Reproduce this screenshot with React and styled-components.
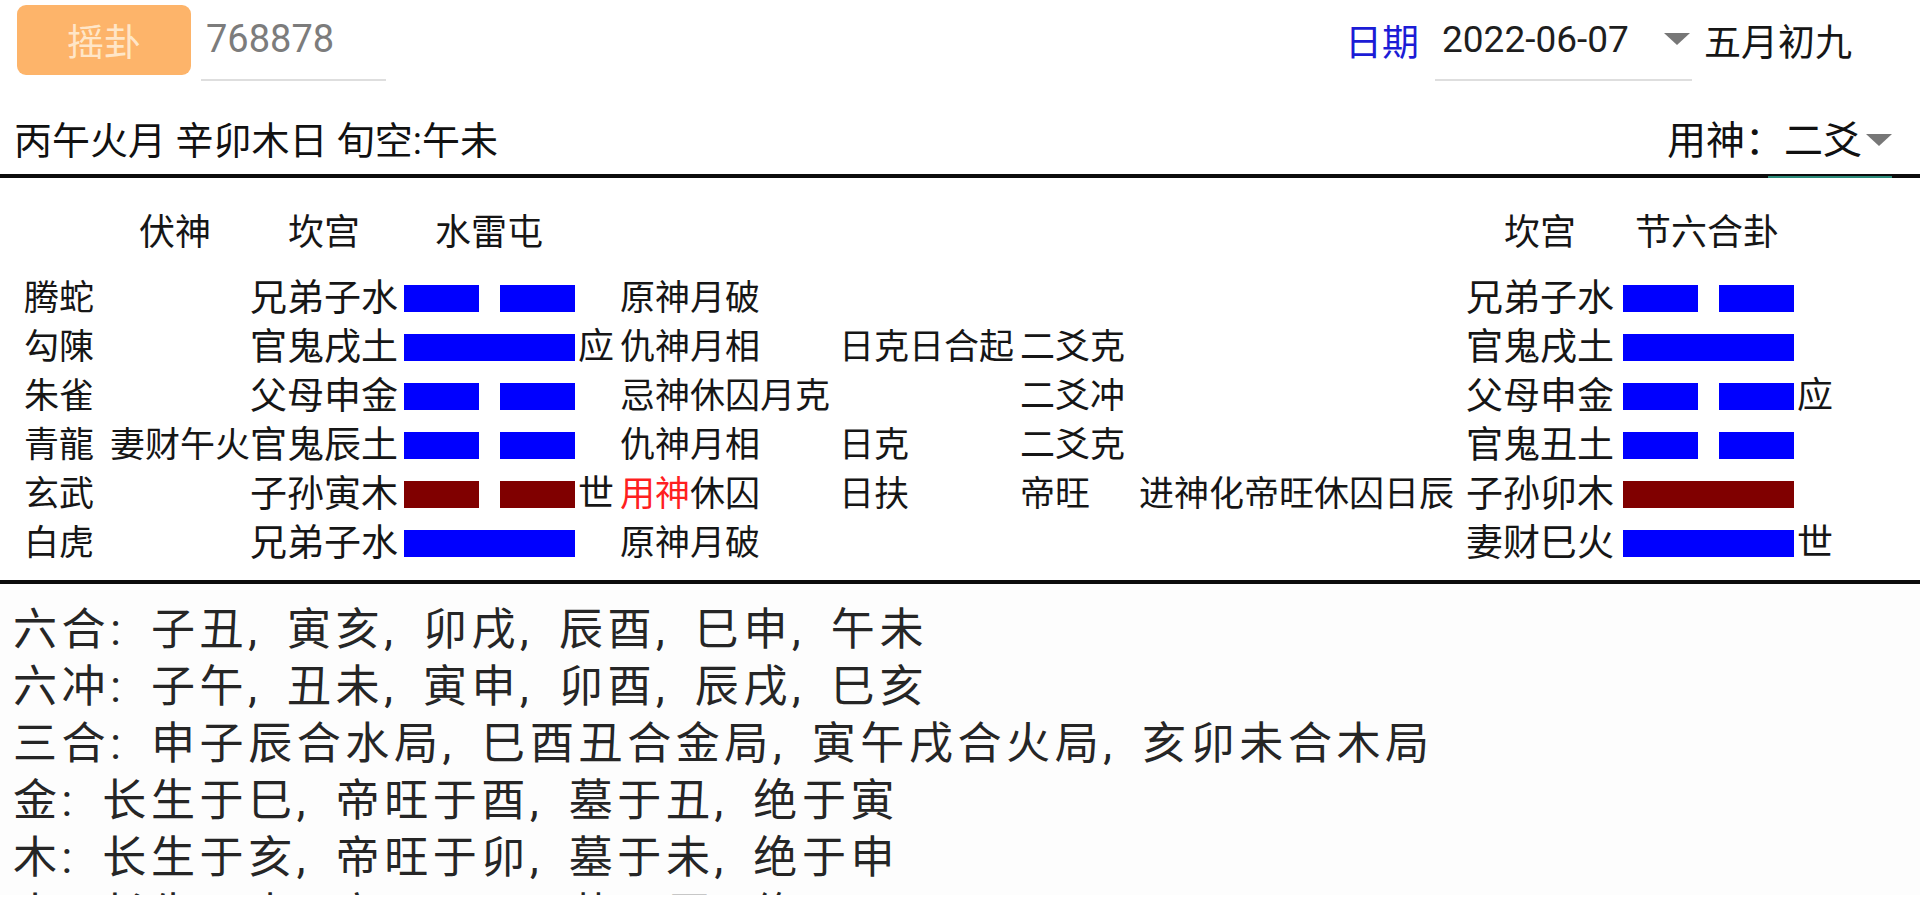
import React from "react";
import styled, { createGlobalStyle } from "styled-components";

const GlobalStyle = createGlobalStyle`
  html, body {
    margin: 0;
    padding: 0;
    background: #ffffff;
  }
  body {
    font-family: Roboto, "Noto Sans CJK SC", sans-serif;
    color: #161616;
    overflow: hidden;
  }
`;

const rows = [
  { god: "腾蛇", fu: "", name: "兄弟子水", yin: true, mark: "", rel: "原神月破", day: "", yao: "", change: "", toName: "兄弟子水", toYin: true, toMark: "" },
  { god: "勾陳", fu: "", name: "官鬼戌土", yin: false, mark: "应", rel: "仇神月相", day: "日克日合起", yao: "二爻克", change: "", toName: "官鬼戌土", toYin: false, toMark: "" },
  { god: "朱雀", fu: "", name: "父母申金", yin: true, mark: "", rel: "忌神休囚月克", day: "", yao: "二爻冲", change: "", toName: "父母申金", toYin: true, toMark: "应" },
  { god: "青龍", fu: "妻财午火", name: "官鬼辰土", yin: true, mark: "", rel: "仇神月相", day: "日克", yao: "二爻克", change: "", toName: "官鬼丑土", toYin: true, toMark: "" },
  { god: "玄武", fu: "", name: "子孙寅木", yin: true, moving: true, mark: "世", rel: "休囚", useGod: true, day: "日扶", yao: "帝旺", change: "进神化帝旺休囚日辰", toName: "子孙卯木", toYin: false, toMoving: true, toMark: "" },
  { god: "白虎", fu: "", name: "兄弟子水", yin: false, mark: "", rel: "原神月破", day: "", yao: "", change: "", toName: "妻财巳火", toYin: false, toMark: "世" },
];

const notes = [
  "六合: 子丑, 寅亥, 卯戌, 辰酉, 巳申, 午未",
  "六冲: 子午, 丑未, 寅申, 卯酉, 辰戌, 巳亥",
  "三合: 申子辰合水局, 巳酉丑合金局, 寅午戌合火局, 亥卯未合木局",
  "金: 长生于巳, 帝旺于酉, 墓于丑, 绝于寅",
  "木: 长生于亥, 帝旺于卯, 墓于未, 绝于申",
  "水: 长生于申, 帝旺于子, 墓于辰, 绝于巳",
];

function Caret() {
  return (
    <CaretIcon viewBox="0 0 26 12" width="26" height="12">
      <polygon points="0,0 26,0 13,12" fill="#777777" />
    </CaretIcon>
  );
}

function Yao({ yin, moving }) {
  const color = moving ? "#800000" : "#0000ff";
  return (
    <YaoBar>
      {yin ? (
        <>
          <YaoPiece color={color} />
          <YaoPiece color={color} />
        </>
      ) : (
        <YaoPiece color={color} solid />
      )}
    </YaoBar>
  );
}

export default function App() {
  return (
    <>
      <GlobalStyle />
      <Page>
        <TopBar>
          <CastButton>摇卦</CastButton>
          <NumberField>768878</NumberField>
          <DateGroup>
            <DateLabel>日期</DateLabel>
            <Spinner>
              <SpinnerValue>2022-06-07</SpinnerValue>
              <Caret />
            </Spinner>
            <LunarDate>五月初九</LunarDate>
          </DateGroup>
        </TopBar>

        <InfoRow>
          <InfoText>丙午火月 辛卯木日 旬空:午未</InfoText>
          <UseGodPicker>
            用神：二爻
            <Caret />
          </UseGodPicker>
        </InfoRow>
        <Divider>
          <PickerLine />
        </Divider>

        <Chart>
          <HeaderRow>
            <HeadCell col={2} pad={29}>伏神</HeadCell>
            <HeadCell col={3} pad={38}>坎宫</HeadCell>
            <HeadCell col={4} pad={31}>水雷屯</HeadCell>
            <HeadCell col={10} pad={38}>坎宫</HeadCell>
            <HeadCell col={11} pad={12}>节六合卦</HeadCell>
          </HeaderRow>
          {rows.map((r) => (
            <ChartRow key={r.god}>
              <Cell>{r.god}</Cell>
              <Cell>{r.fu}</Cell>
              <NameCell>{r.name}</NameCell>
              <Yao yin={r.yin} moving={r.moving} />
              <MarkCell>{r.mark}</MarkCell>
              <Cell>
                {r.useGod && <UseGod>用神</UseGod>}
                {r.rel}
              </Cell>
              <Cell>{r.day}</Cell>
              <Cell>{r.yao}</Cell>
              <Cell>{r.change}</Cell>
              <NameCell>{r.toName}</NameCell>
              <Yao yin={r.toYin} moving={r.toMoving} />
              <MarkCell>{r.toMark}</MarkCell>
            </ChartRow>
          ))}
        </Chart>
        <Divider />

        <Notes>
          {notes.map((n) => (
            <NoteLine key={n}>{n}</NoteLine>
          ))}
        </Notes>
      </Page>
    </>
  );
}

const Page = styled.div`
  height: 100vh;
  box-sizing: border-box;
  padding-bottom: 9px;
  overflow: hidden;
  display: flex;
  flex-direction: column;
`;

const TopBar = styled.div`
  display: flex;
  align-items: flex-start;
  flex-shrink: 0;
  height: 86px;
  padding: 5px 68px 0 17px;
  box-sizing: border-box;
`;

const CastButton = styled.div`
  width: 174px;
  height: 70px;
  border-radius: 9px;
  background: #fdb46a;
  color: #ffe6c8;
  font-size: 37px;
  display: flex;
  align-items: center;
  justify-content: center;
  flex-shrink: 0;
`;

const NumberField = styled.div`
  margin-left: 10px;
  width: 185px;
  height: 76px;
  box-sizing: border-box;
  border-bottom: 2px solid #dedede;
  padding: 0 0 6px 5px;
  display: flex;
  align-items: center;
  font-size: 38px;
  color: #7c7c7c;
`;

const DateGroup = styled.div`
  margin-left: auto;
  display: flex;
  align-items: flex-start;
`;

const DateLabel = styled.div`
  height: 70px;
  display: flex;
  align-items: center;
  font-size: 37px;
  color: #1c1cd6;
`;

const Spinner = styled.div`
  margin-left: 16px;
  width: 257px;
  height: 76px;
  box-sizing: border-box;
  border-bottom: 2px solid #dedede;
  padding: 0 2px 6px 7px;
  display: flex;
  align-items: center;
`;

const SpinnerValue = styled.span`
  font-size: 37px;
  color: #1e1e1e;
  flex: 1;
`;

const CaretIcon = styled.svg`
  display: block;
  flex-shrink: 0;
`;

const LunarDate = styled.div`
  margin-left: 12px;
  height: 70px;
  display: flex;
  align-items: center;
  font-size: 37px;
  color: #161616;
`;

const InfoRow = styled.div`
  display: flex;
  align-items: center;
  flex-shrink: 0;
  height: 88px;
  padding: 14px 28px 0 14px;
  box-sizing: border-box;
  color: #111111;
`;

const InfoText = styled.div`
  font-size: 38px;
`;

const UseGodPicker = styled.div`
  margin-left: auto;
  display: flex;
  align-items: center;
  gap: 4px;
  font-size: 39px;

  svg {
    margin-top: 6px;
  }
`;

const Divider = styled.div`
  height: 4px;
  flex-shrink: 0;
  background: #0c0c0c;
  display: flex;
  justify-content: flex-end;
  align-items: flex-end;
  padding-right: 28px;
`;

const PickerLine = styled.div`
  width: 124px;
  height: 2px;
  background: #2b8c7a;
`;

const columns = "86px 140px 154px 171px 45px 219px 181px 119px 327px 157px 171px 60px";

const Chart = styled.div`
  flex-shrink: 0;
  padding: 25px 0 12px 24px;
  font-size: 35px;
  color: #161616;
`;

const HeaderRow = styled.div`
  display: grid;
  grid-template-columns: ${columns};
  height: 49px;
  align-items: center;
  margin-bottom: 22px;
  font-size: 36px;
`;

const HeadCell = styled.div`
  grid-column: ${(p) => p.col};
  grid-row: 1;
  padding-left: ${(p) => p.pad}px;
  white-space: nowrap;
`;

const ChartRow = styled.div`
  display: grid;
  grid-template-columns: ${columns};
  height: 49px;
  align-items: center;
`;

const Cell = styled.div`
  white-space: nowrap;
  line-height: 49px;
`;

const NameCell = styled(Cell)`
  font-size: 37px;
`;

const MarkCell = styled(Cell)`
  padding-left: 3px;
  font-size: 36px;
`;

const UseGod = styled.span`
  color: #ff1f1f;
`;

const YaoBar = styled.div`
  display: flex;
  justify-content: space-between;
  height: 27px;
`;

const YaoPiece = styled.div`
  width: ${(p) => (p.solid ? "171px" : "75px")};
  height: 100%;
  background: ${(p) => p.color};
`;

const Notes = styled.div`
  flex: 1 1 0;
  min-height: 0;
  overflow: hidden;
  background: #fdfdfd;
  padding: 18px 0 0 13px;
  font-size: 44px;
  letter-spacing: 4.6px;
  word-spacing: 10px;
  color: #262626;
`;

const NoteLine = styled.div`
  line-height: 57px;
  white-space: nowrap;
`;
